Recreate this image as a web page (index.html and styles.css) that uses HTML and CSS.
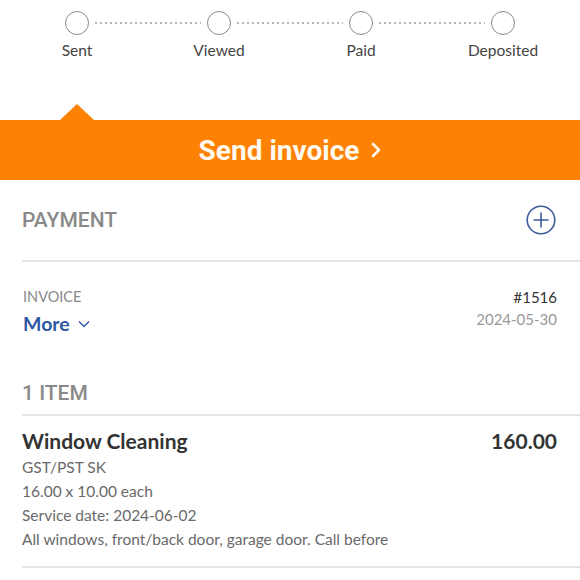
FILE: index.html
```html
<!DOCTYPE html>
<html lang="en">
<head>
    <meta charset="UTF-8">
    <meta name="viewport" content="width=device-width, initial-scale=1.0">
    <title>Invoice #1516</title>
    <link rel="stylesheet" href="styles.css">
</head>
<body>
    <div class="stepper">
        <div class="track">
            <span class="dot"></span>
            <span class="line"></span>
            <span class="dot"></span>
            <span class="line"></span>
            <span class="dot"></span>
            <span class="line"></span>
            <span class="dot"></span>
        </div>
        <div class="labels">
            <span>Sent</span>
            <span>Viewed</span>
            <span>Paid</span>
            <span>Deposited</span>
        </div>
    </div>

    <div class="send-bar">
        Send invoice
        <svg width="10" height="16" viewBox="0 0 10 16"><path d="M2 2 L8 8 L2 14" fill="none" stroke="#fffaf0" stroke-width="2.6" stroke-linecap="round" stroke-linejoin="round"/></svg>
    </div>

    <div class="payment">
        <span class="section-title">PAYMENT</span>
        <svg class="add" width="30" height="30" viewBox="0 0 30 30">
            <circle cx="15" cy="15" r="13.8" fill="none" stroke="#3d5a9b" stroke-width="1.6"/>
            <path d="M15 7.5 V22.5 M7.5 15 H22.5" stroke="#3d5a9b" stroke-width="1.6"/>
        </svg>
    </div>

    <div class="invoice">
        <div>
            <div class="muted-label">INVOICE</div>
            <div class="more">More
                <svg width="12" height="8" viewBox="0 0 12 8"><path d="M1 1.5 L6 6.5 L11 1.5" fill="none" stroke="#2f57a3" stroke-width="1.4"/></svg>
            </div>
        </div>
        <div class="invoice-meta">
            <div class="number">#1516</div>
            <div class="date">2024-05-30</div>
        </div>
    </div>

    <div class="items-head">
        <span class="section-title">1 ITEM</span>
    </div>

    <div class="item">
        <div class="item-top">
            <span class="item-name">Window Cleaning</span>
            <span class="item-price">160.00</span>
        </div>
        <div class="item-line">GST/PST SK</div>
        <div class="item-line">16.00 x 10.00 each</div>
        <div class="item-line">Service date: 2024-06-02</div>
        <div class="item-line">All windows, front/back door, garage door. Call before</div>
    </div>
</body>
</html>
```

FILE: styles.css
```css
* {
    margin: 0;
    padding: 0;
    box-sizing: border-box;
}

body {
    font-family: Lato, "Open Sans", sans-serif;
    background-color: #ffffff;
    color: #333;
}

/* Status stepper */
.stepper {
    height: 120px;
    padding-top: 11px;
}

.track {
    display: flex;
    align-items: center;
    padding: 0 65px;
}

.dot {
    width: 24px;
    height: 24px;
    border: 1.5px solid #8a8a8a;
    border-radius: 50%;
}

.line {
    flex: 1;
    height: 2px;
    margin: 0 6px;
    background-image: linear-gradient(to right, #b5b5b5 40%, transparent 40%);
    background-size: 5px 2px;
}

.labels {
    display: grid;
    grid-template-columns: repeat(4, 142px);
    padding-left: 6px;
    margin-top: 6px;
    font-size: 15.5px;
    line-height: 18px;
    color: #444;
    text-align: center;
}

/* Orange action bar */
.send-bar {
    position: relative;
    height: 60px;
    background-color: #fd8204;
    color: #fffaf0;
    font-family: Roboto, Inter, sans-serif;
    font-weight: 700;
    font-size: 28px;
    display: flex;
    align-items: center;
    justify-content: center;
    gap: 12px;
}

.send-bar::before {
    content: "";
    position: absolute;
    top: -16px;
    left: 60px;
    border-left: 17px solid transparent;
    border-right: 17px solid transparent;
    border-bottom: 16px solid #fd8204;
}

.section-title {
    font-family: Roboto, Inter, sans-serif;
    font-weight: 500;
    font-size: 21px;
    color: #8a8a8a;
}

/* Payment */
.payment {
    height: 82px;
    margin-left: 22px;
    padding-right: 24px;
    border-bottom: 2px solid #e4e4e4;
    display: flex;
    align-items: center;
    justify-content: space-between;
}

/* Invoice details */
.invoice {
    display: flex;
    justify-content: space-between;
    padding: 26px 23px 0 23px;
}

.muted-label {
    font-size: 14.5px;
    line-height: 18px;
    color: #888;
}

.more {
    margin-top: 6px;
    font-size: 19.5px;
    line-height: 24px;
    font-weight: 700;
    color: #2f57a3;
    display: flex;
    align-items: center;
    gap: 8px;
}

.invoice-meta {
    text-align: right;
}

.number {
    font-size: 15px;
    line-height: 18px;
    color: #333;
}

.date {
    margin-top: 3px;
    font-size: 15px;
    line-height: 20px;
    color: #999;
}

/* Items */
.items-head {
    margin: 45px 0 0 22px;
    padding-bottom: 8px;
    line-height: 24px;
    border-bottom: 2px solid #e4e4e4;
}

.item {
    margin-left: 22px;
    padding: 13px 23px 15px 0;
    border-bottom: 2px solid #e4e4e4;
}

.item-top {
    display: flex;
    justify-content: space-between;
    font-size: 21px;
    line-height: 24px;
    font-weight: 700;
    color: #333;
    margin-bottom: 2px;
}

.item-line {
    font-size: 15.5px;
    line-height: 24px;
    color: #6a6a6a;
}
```
